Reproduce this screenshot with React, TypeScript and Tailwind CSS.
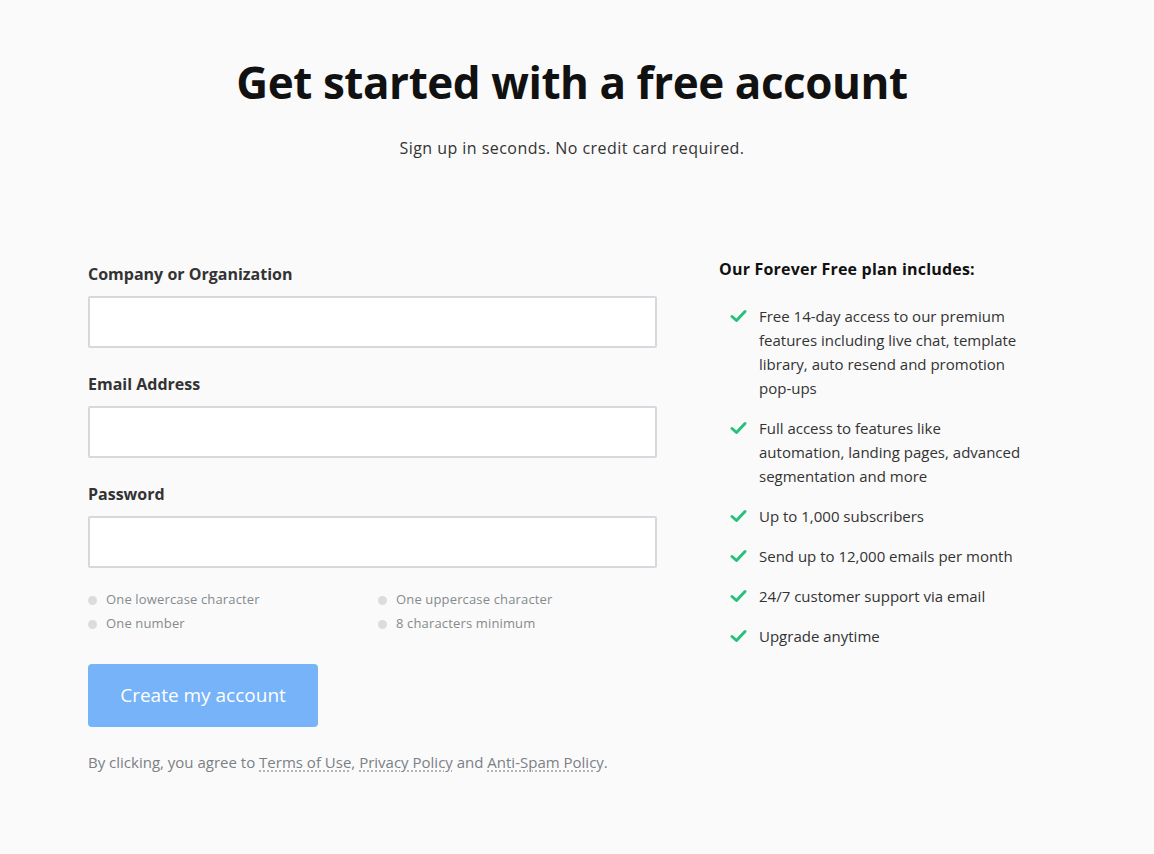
import React from "react";

const Check = () => (
  <svg width="17" height="14" viewBox="0 0 17 14" className="mt-[5px] shrink-0">
    <path d="M2 7.5 L6.5 11.5 L15 2.5" fill="none" stroke="#26c27c" strokeWidth="3" strokeLinecap="round" strokeLinejoin="round" />
  </svg>
);

const Field = ({ label, type = "text" }: { label: string; type?: string }) => (
  <div className="flex flex-col">
    <label className="text-[16px] font-bold text-[#333] leading-[24px] mb-[10px]">{label}</label>
    <input type={type} className="h-[52px] w-full bg-white border-2 border-[#d5d8dc] rounded-[2px] outline-none" />
  </div>
);

const Req = ({ text }: { text: string }) => (
  <div className="flex items-center gap-[9px] h-[24px]">
    <span className="w-[9px] h-[9px] rounded-full bg-[#dcdcdc]" />
    <span className="text-[13px] text-[#858a8e] tracking-[0.15px]">{text}</span>
  </div>
);

const items = [
  "Free 14-day access to our premium features including live chat, template library, auto resend and promotion pop-ups",
  "Full access to features like automation, landing pages, advanced segmentation and more",
  "Up to 1,000 subscribers",
  "Send up to 12,000 emails per month",
  "24/7 customer support via email",
  "Upgrade anytime",
];

export default function App() {
  return (
    <div className="min-h-[854px] bg-[#fafafa]" style={{ fontFamily: "'Open Sans', Lato, sans-serif" }}>
      <div className="flex flex-col items-center pt-[54px] pr-[10px]">
        <h1 className="text-[44px] font-bold text-[#111] leading-[56px] tracking-[-0.45px]">Get started with a free account</h1>
        <p className="mt-[26px] text-[16px] text-[#333] leading-[24px] tracking-[0.45px]">Sign up in seconds. No credit card required.</p>
      </div>
      <div className="mx-auto w-[978px] flex mt-[102px]">
        <div className="w-[569px] flex flex-col">
          <div className="flex flex-col gap-[24px]">
            <Field label="Company or Organization" />
            <Field label="Email Address" type="email" />
            <Field label="Password" type="password" />
          </div>
          <div className="grid grid-cols-[290px_1fr] mt-[20px]">
            <Req text="One lowercase character" />
            <Req text="One uppercase character" />
            <Req text="One number" />
            <Req text="8 characters minimum" />
          </div>
          <button className="mt-[28px] w-[230px] h-[63px] rounded-[4px] bg-[#77b3f9] text-white text-[19px]">Create my account</button>
          <p className="mt-[23px] text-[15px] text-[#7b8085] leading-[24px]">
            By clicking, you agree to{" "}
            <span className="underline decoration-dotted decoration-[#9a9ea2] underline-offset-[3px]">Terms of Use</span>,{" "}
            <span className="underline decoration-dotted decoration-[#9a9ea2] underline-offset-[3px]">Privacy Policy</span> and{" "}
            <span className="underline decoration-dotted decoration-[#9a9ea2] underline-offset-[3px]">Anti-Spam Policy</span>.
          </p>
        </div>
        <div className="ml-[62px] flex-1 flex flex-col">
          <h2 className="text-[16px] font-bold text-[#111] leading-[24px] -mt-[5px] tracking-[0.2px]">Our Forever Free plan includes:</h2>
          <ul className="mt-[23px] flex flex-col gap-[16px] pl-[11px]">
            {items.map((t) => (
              <li key={t} className="flex gap-[12px]">
                <Check />
                <span className="text-[15px] leading-[24px] text-[#333] w-[266px]">{t}</span>
              </li>
            ))}
          </ul>
        </div>
      </div>
    </div>
  );
}
